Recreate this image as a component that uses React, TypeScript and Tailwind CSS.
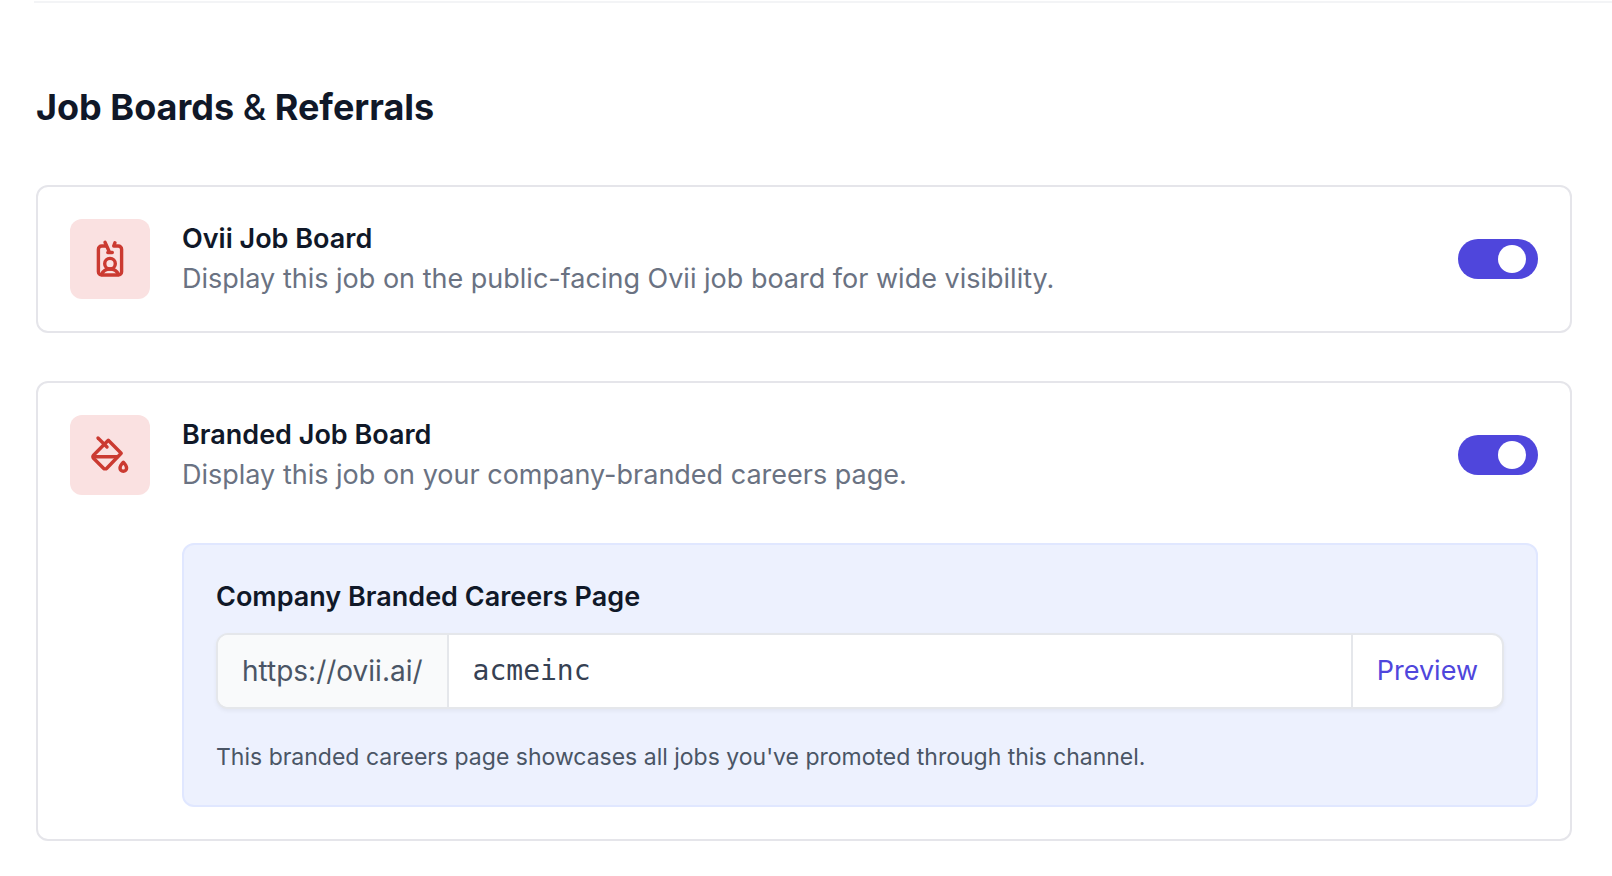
import { useState, type ReactNode } from 'react';

function BadgeIcon() {
  return (
    <svg viewBox="0 0 80 80" className="size-20" fill="none" stroke="currentColor" strokeWidth="3.4" strokeLinecap="round" strokeLinejoin="round" aria-hidden="true">
      <path d="M36 27h-4.300a3.300 3.300 0 0 0-3.300 3.300v22.400a3.300 3.300 0 0 0 3.300 3.300h16.600a3.300 3.300 0 0 0 3.300-3.300V30.300A3.300 3.300 0 0 0 48.300 27h-4.600l1.200-3.200" />
      <path d="M35 23.300l4.500 10M37.800 33.500h4.500" />
      <circle cx="40" cy="44.700" r="5.300" />
      <path d="M31.500 55.500c1.500-3.500 4.500-5.500 8.500-5.500s7 2 8.500 5.500" />
    </svg>
  );
}

function PaintBucketIcon() {
  return (
    <svg viewBox="0 0 80 80" className="size-20" fill="none" stroke="currentColor" strokeWidth="3.4" strokeLinecap="round" strokeLinejoin="round" aria-hidden="true">
      <path d="M28 23l9 9" />
      <path d="M38.300 25.300 51.200 38.300 36.800 53.200a2.300 2.300 0 0 1-3.300 0L23.500 43.200a2.100 2.100 0 0 1 0-3z" />
      <path d="M23.500 41.700h24" />
      <path d="M53.300 47.200c-1.900 2-3.300 3.900-3.300 5.800a3.300 3.300 0 0 0 6.600 0c0-1.900-1.400-3.800-3.300-5.800z" />
    </svg>
  );
}

interface BoardCardProps {
  id: string;
  icon: ReactNode;
  title: string;
  description: string;
  enabled: boolean;
  onToggle: (value: boolean) => void;
  children?: ReactNode;
}

function BoardCard({ id, icon, title, description, enabled, onToggle, children }: BoardCardProps) {
  return (
    <div className="rounded-xl border-2 border-[#e5e5ea] bg-white p-8">
      <div className="flex items-center gap-8">
        <div className="size-20 shrink-0 rounded-xl bg-[#fae1e1] text-[#cb3a31]">{icon}</div>
        <div className="min-w-0 flex-1 text-[27px] leading-10">
          <label htmlFor={id} className="block font-semibold text-gray-900">{title}</label>
          <p className="text-gray-500">{description}</p>
        </div>
        <input
          id={id}
          type="checkbox"
          role="switch"
          checked={enabled}
          onChange={e => onToggle(e.target.checked)}
          className="flex h-10 w-20 shrink-0 cursor-pointer appearance-none items-center rounded-full bg-gray-300 px-3 before:size-7 before:rounded-full before:bg-white checked:justify-end checked:bg-[#4f46dc]"
        />
      </div>
      {children}
    </div>
  );
}

export default function App() {
  const [oviiEnabled, setOviiEnabled] = useState(true);
  const [brandedEnabled, setBrandedEnabled] = useState(true);
  const [slug, setSlug] = useState('acmeinc');

  return (
    <div className="bg-white pt-px font-['Inter','Liberation_Sans',sans-serif]">
      <div className="ml-[34px] border-t-2 border-gray-100" />

      <section className="pt-[84px] pr-10 pb-9 pl-9">
        <h2 className="mb-[58px] text-4xl font-bold text-gray-900">
          Job Boards <span className="font-medium">&amp;</span> Referrals
        </h2>

        <div className="space-y-12">
          <BoardCard
            id="ovii-board"
            icon={<BadgeIcon />}
            title="Ovii Job Board"
            description="Display this job on the public-facing Ovii job board for wide visibility."
            enabled={oviiEnabled}
            onToggle={setOviiEnabled}
          />

          <BoardCard
            id="branded-board"
            icon={<PaintBucketIcon />}
            title="Branded Job Board"
            description="Display this job on your company-branded careers page."
            enabled={brandedEnabled}
            onToggle={setBrandedEnabled}
          >
            {brandedEnabled && (
              <div className="mt-12 ml-28 rounded-xl border-2 border-[#e0e7ff] bg-[#edf1fe] p-8">
                <label htmlFor="slug" className="mb-4 block text-[27px] leading-10 font-semibold text-gray-900">
                  Company Branded Careers Page
                </label>
                <div className="flex overflow-hidden rounded-xl border-2 border-gray-200 bg-white text-[28px] leading-10 shadow-[0_2px_4px_rgba(0,0,0,0.05)]">
                  <span className="border-r-2 border-gray-200 bg-gray-50 px-6 py-4 text-gray-600">https://ovii.ai/</span>
                  <input
                    id="slug"
                    type="text"
                    value={slug}
                    onChange={e => setSlug(e.target.value)}
                    className="min-w-0 flex-1 px-6 py-4 font-['DejaVu_Sans_Mono',monospace] text-gray-700 outline-none"
                  />
                  <button type="button" className="border-l-2 border-gray-200 px-6 py-4 text-[27px] leading-10 text-[#4f46dc]">Preview</button>
                </div>
                <p className="mt-8 text-[23px] leading-8 text-gray-600">
                  This branded careers page showcases all jobs you've promoted through this channel.
                </p>
              </div>
            )}
          </BoardCard>
        </div>
      </section>
    </div>
  );
}
